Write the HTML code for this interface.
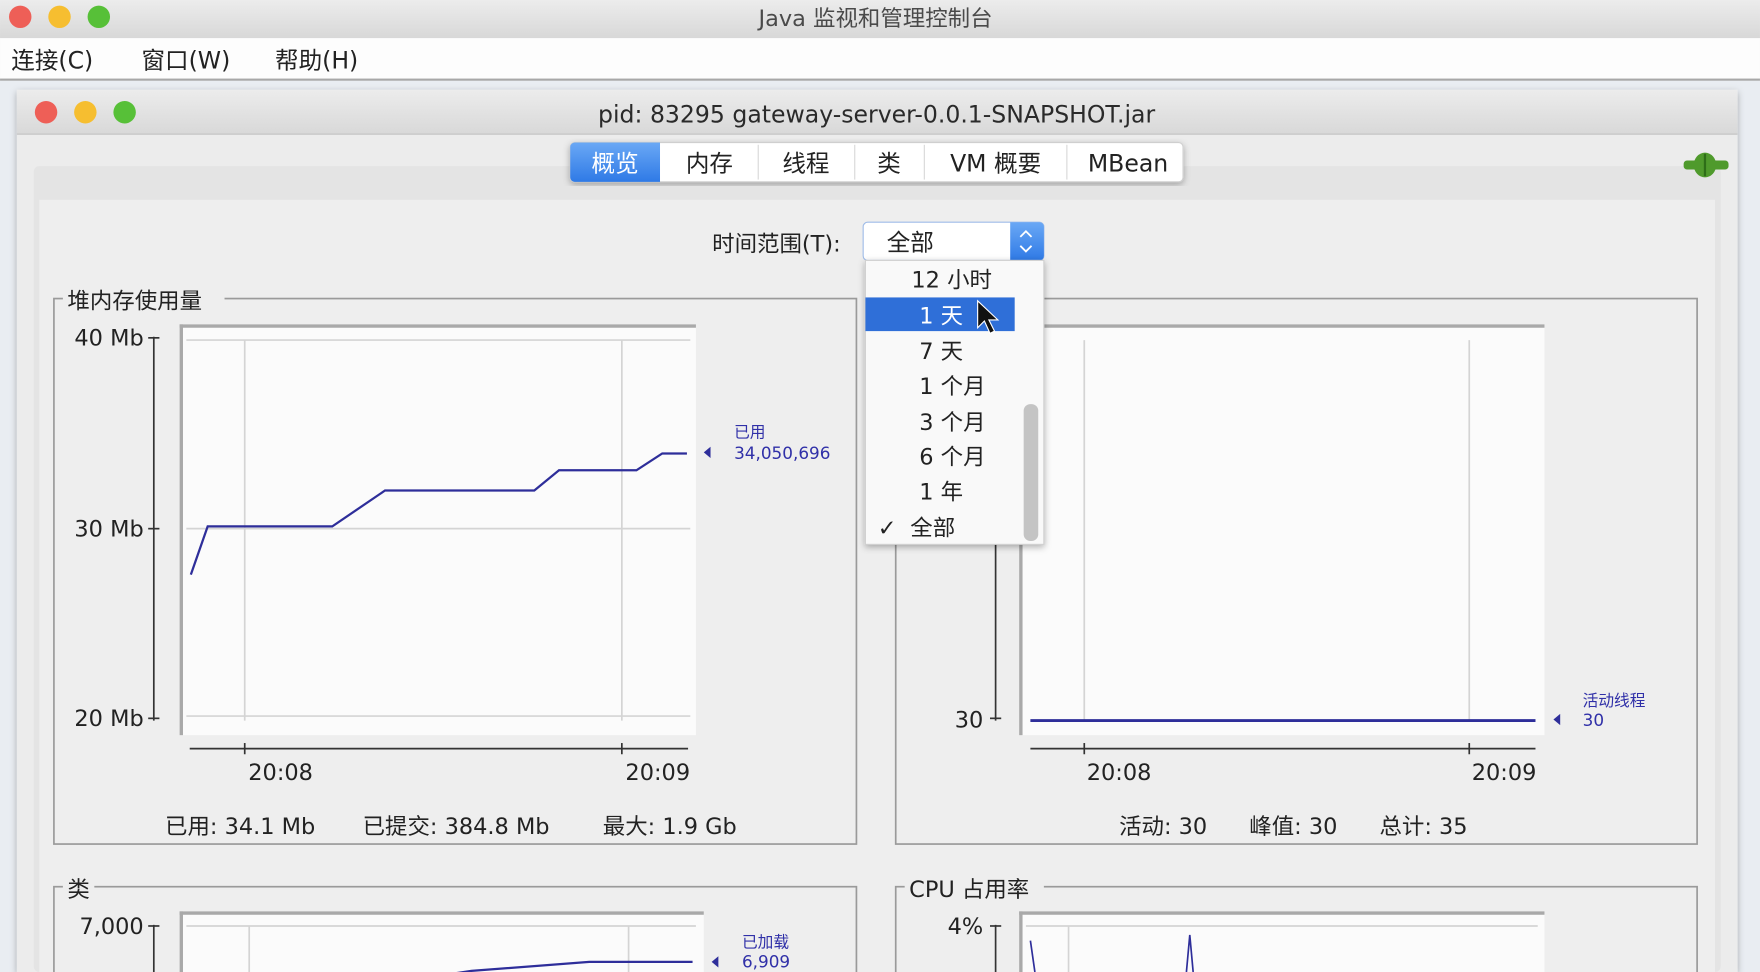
<!DOCTYPE html>
<html><head><meta charset="utf-8"><style>
html,body{margin:0;padding:0;width:1760px;height:972px;overflow:hidden;background:#eceef1}
svg{display:block}
text{font-family:"DejaVu Sans","Noto Sans CJK SC",sans-serif;fill:#222}
</style></head><body>
<svg width="1760" height="972" viewBox="0 0 1568 866" xmlns="http://www.w3.org/2000/svg">
<defs>
<linearGradient id="tb" x1="0" y1="0" x2="0" y2="1"><stop offset="0" stop-color="#ececec"/><stop offset="1" stop-color="#d8d8d8"/></linearGradient>
<linearGradient id="blue" x1="0" y1="0" x2="0" y2="1"><stop offset="0" stop-color="#6aa8f5"/><stop offset="1" stop-color="#2f7ae6"/></linearGradient>
<filter id="sh" x="-10%" y="-10%" width="120%" height="120%"><feDropShadow dx="0" dy="2" stdDeviation="3" flood-opacity="0.3"/></filter>
</defs>
<rect x="0" y="0" width="1568" height="34" fill="url(#tb)"/>
<circle cx="18" cy="15" r="10" fill="#ee5f57"/><circle cx="53" cy="15" r="10" fill="#f6be30"/><circle cx="88" cy="15" r="10" fill="#57c038"/>
<text x="780" y="23" font-size="20" text-anchor="middle" style="fill:#4a4a4a">Java 监视和管理控制台</text>
<rect x="0" y="34" width="1568" height="37" fill="#fdfdfd"/>
<rect x="0" y="70" width="1568" height="2" fill="#a8a8a8"/>
<text x="10" y="61" font-size="21">连接(C)</text>
<text x="126" y="61" font-size="21">窗口(W)</text>
<text x="245" y="61" font-size="21">帮助(H)</text>
<rect x="0" y="72" width="1568" height="794" fill="#e9edf2"/>
<rect x="15" y="80" width="1533" height="786" fill="#ececec" filter="url(#sh)"/>
<rect x="15" y="80" width="1533" height="40" fill="url(#tb)"/>
<rect x="15" y="119" width="1533" height="1" fill="#c4c4c4"/>
<circle cx="41" cy="100" r="10" fill="#ee5f57"/><circle cx="76" cy="100" r="10" fill="#f6be30"/><circle cx="111" cy="100" r="10" fill="#57c038"/>
<text x="781" y="109" font-size="21" text-anchor="middle" style="fill:#2a2a2a">pid: 83295 gateway-server-0.0.1-SNAPSHOT.jar</text>
<rect x="30" y="148" width="1503" height="718" rx="5" fill="#e4e4e4"/>
<rect x="35" y="178" width="1493" height="688" fill="#eeeeee"/>
<rect x="508" y="127" width="546" height="35" rx="4" fill="#fff" stroke="#cfcfcf" filter="url(#sh)"/>
<path d="M512 127 H588 V162 H512 a4 4 0 0 1 -4 -4 V131 a4 4 0 0 1 4 -4Z" fill="url(#blue)"/>
<g fill="#d8d8d8"><rect x="675" y="129" width="1" height="31"/><rect x="761" y="129" width="1" height="31"/><rect x="823" y="129" width="1" height="31"/><rect x="950" y="129" width="1" height="31"/></g>
<g font-size="21">
<text x="548" y="153" text-anchor="middle" style="fill:#fff">概览</text>
<text x="632" y="153" text-anchor="middle">内存</text>
<text x="718" y="153" text-anchor="middle">线程</text>
<text x="792" y="153" text-anchor="middle">类</text>
<text x="887" y="153" text-anchor="middle">VM 概要</text>
<text x="1005" y="153" text-anchor="middle">MBean</text>
</g>
<g fill="#4f9a2c"><rect x="1500" y="143" width="40" height="8" rx="3"/><ellipse cx="1519" cy="147" rx="10" ry="11"/></g>
<rect x="1518" y="137" width="2" height="20" fill="#2e6e18"/>
<text x="749" y="224" font-size="20" text-anchor="end">时间范围(T):</text>
<rect x="769" y="198" width="161" height="34" rx="4" fill="#fff" stroke="#9fbce8"/>
<path d="M900 198 H926 a4 4 0 0 1 4 4 V228 a4 4 0 0 1 -4 4 H900Z" fill="url(#blue)"/>
<path d="M909 211 l5 -5 l5 5 M909 219 l5 5 l5 -5" stroke="#fff" stroke-width="1.6" fill="none"/>
<text x="790" y="223" font-size="21">全部</text>
<g fill="none" stroke="#9a9a9a" stroke-width="1.5">
<rect x="48" y="266" width="715" height="486"/><rect x="798" y="266" width="714" height="486"/>
<rect x="48" y="790" width="715" height="100"/><rect x="798" y="790" width="714" height="100"/>
</g>
<g fill="#eeeeee"><rect x="56" y="258" width="144" height="18"/><rect x="56" y="782" width="28" height="18"/><rect x="806" y="782" width="124" height="18"/></g>
<text x="60" y="275" font-size="20">堆内存使用量</text>
<text x="60" y="799" font-size="20">类</text>
<text x="810" y="799" font-size="20">CPU 占用率</text>
<rect x="160" y="289" width="460" height="366" fill="#fbfbfb"/>
<rect x="160" y="289" width="460" height="3" fill="#a9a9a9"/><rect x="160" y="289" width="3" height="366" fill="#a9a9a9"/>
<g stroke="#d4d4d4" stroke-width="1.5"><line x1="218" y1="303" x2="218" y2="642"/><line x1="554" y1="303" x2="554" y2="642"/><line x1="166" y1="303" x2="615" y2="303"/><line x1="166" y1="471" x2="615" y2="471"/><line x1="166" y1="638" x2="615" y2="638"/></g>
<g stroke="#333" stroke-width="1.5"><line x1="137" y1="300" x2="137" y2="642"/><line x1="132" y1="301" x2="142" y2="301"/><line x1="132" y1="471" x2="142" y2="471"/><line x1="132" y1="640" x2="142" y2="640"/>
<line x1="169" y1="667" x2="613" y2="667"/><line x1="218" y1="662" x2="218" y2="672"/><line x1="554" y1="662" x2="554" y2="672"/></g>
<g font-size="20"><text x="128" y="308" text-anchor="end">40 Mb</text><text x="128" y="478" text-anchor="end">30 Mb</text><text x="128" y="647" text-anchor="end">20 Mb</text>
<text x="250" y="695" text-anchor="middle">20:08</text><text x="586" y="695" text-anchor="middle">20:09</text></g>
<polyline points="170,512 185,469 296,469 343,437 476,437 498,419 567,419 590,404 612,404" fill="none" stroke="#2e2e9a" stroke-width="2"/>
<path d="M627 403 l6 -5 v10z" fill="#2e2e9a"/>
<text x="654" y="390" font-size="14" style="fill:#3030a8">已用</text><text x="654" y="409" font-size="15" style="fill:#3030a8">34,050,696</text>
<g font-size="20"><text x="147" y="743">已用: 34.1 Mb</text><text x="323" y="743">已提交: 384.8 Mb</text><text x="537" y="743">最大: 1.9 Gb</text></g>
<rect x="908" y="289" width="468" height="366" fill="#fbfbfb"/>
<rect x="908" y="289" width="468" height="3" fill="#a9a9a9"/><rect x="908" y="289" width="3" height="366" fill="#a9a9a9"/>
<g stroke="#d4d4d4" stroke-width="1.5"><line x1="966" y1="303" x2="966" y2="642"/><line x1="1309" y1="303" x2="1309" y2="642"/></g>
<g stroke="#333" stroke-width="1.5"><line x1="887" y1="300" x2="887" y2="642"/><line x1="882" y1="640" x2="892" y2="640"/>
<line x1="918" y1="667" x2="1368" y2="667"/><line x1="966" y1="662" x2="966" y2="672"/><line x1="1309" y1="662" x2="1309" y2="672"/></g>
<line x1="918" y1="642" x2="1368" y2="642" stroke="#2e2e9a" stroke-width="2.5"/>
<g font-size="20"><text x="876" y="648" text-anchor="end">30</text><text x="997" y="695" text-anchor="middle">20:08</text><text x="1340" y="695" text-anchor="middle">20:09</text></g>
<path d="M1384 641 l6 -5 v10z" fill="#2e2e9a"/>
<text x="1410" y="629" font-size="14" style="fill:#3030a8">活动线程</text><text x="1410" y="647" font-size="15" style="fill:#3030a8">30</text>
<g font-size="20"><text x="997" y="743">活动: 30</text><text x="1113" y="743">峰值: 30</text><text x="1229" y="743">总计: 35</text></g>
<rect x="160" y="812" width="467" height="60" fill="#fbfbfb"/>
<rect x="160" y="812" width="467" height="3" fill="#a9a9a9"/><rect x="160" y="812" width="3" height="60" fill="#a9a9a9"/>
<g stroke="#d4d4d4" stroke-width="1.5"><line x1="222" y1="825" x2="222" y2="866"/><line x1="560" y1="825" x2="560" y2="866"/><line x1="166" y1="825" x2="620" y2="825"/></g>
<g stroke="#333" stroke-width="1.5"><line x1="137" y1="824" x2="137" y2="866"/><line x1="132" y1="825" x2="142" y2="825"/></g>
<text x="128" y="832" font-size="20" text-anchor="end">7,000</text>
<polyline points="400,868 420,865 525,857 617,857" fill="none" stroke="#2e2e9a" stroke-width="2"/>
<path d="M634 857 l6 -5 v10z" fill="#2e2e9a"/>
<text x="661" y="844" font-size="14" style="fill:#3030a8">已加载</text><text x="661" y="862" font-size="15" style="fill:#3030a8">6,909</text>
<rect x="908" y="812" width="468" height="60" fill="#fbfbfb"/>
<rect x="908" y="812" width="468" height="3" fill="#a9a9a9"/><rect x="908" y="812" width="3" height="60" fill="#a9a9a9"/>
<g stroke="#d4d4d4" stroke-width="1.5"><line x1="952" y1="825" x2="952" y2="866"/><line x1="914" y1="825" x2="1370" y2="825"/></g>
<g stroke="#333" stroke-width="1.5"><line x1="887" y1="824" x2="887" y2="866"/><line x1="882" y1="825" x2="892" y2="825"/></g>
<text x="876" y="832" font-size="20" text-anchor="end">4%</text>
<polyline points="918,838 922,866" fill="none" stroke="#2e2e9a" stroke-width="1.5"/>
<polyline points="1057,866 1060,833 1063,866" fill="none" stroke="#2e2e9a" stroke-width="1.5"/>
<rect x="771" y="232" width="159" height="253" fill="#f9f9f9" stroke="#d0d0d0" filter="url(#sh)"/>
<rect x="771" y="265" width="133" height="30" fill="#2f6fd8"/>
<rect x="912" y="360" width="13" height="122" rx="6" fill="#c4c4c4"/>
<g font-size="20">
<text x="812" y="256">12 小时</text>
<text x="819" y="288" style="fill:#fff">1 天</text>
<text x="819" y="320">7 天</text>
<text x="819" y="351">1 个月</text>
<text x="819" y="383">3 个月</text>
<text x="819" y="414">6 个月</text>
<text x="819" y="445">1 年</text>
<text x="782" y="477">✓</text><text x="811" y="477">全部</text>
</g>
<path d="M871 268 V292 L877 286 L882 297 L886 295 L881 285 L889 285 Z" fill="#111" stroke="#fff" stroke-width="1"/>
</svg>
</body></html>
